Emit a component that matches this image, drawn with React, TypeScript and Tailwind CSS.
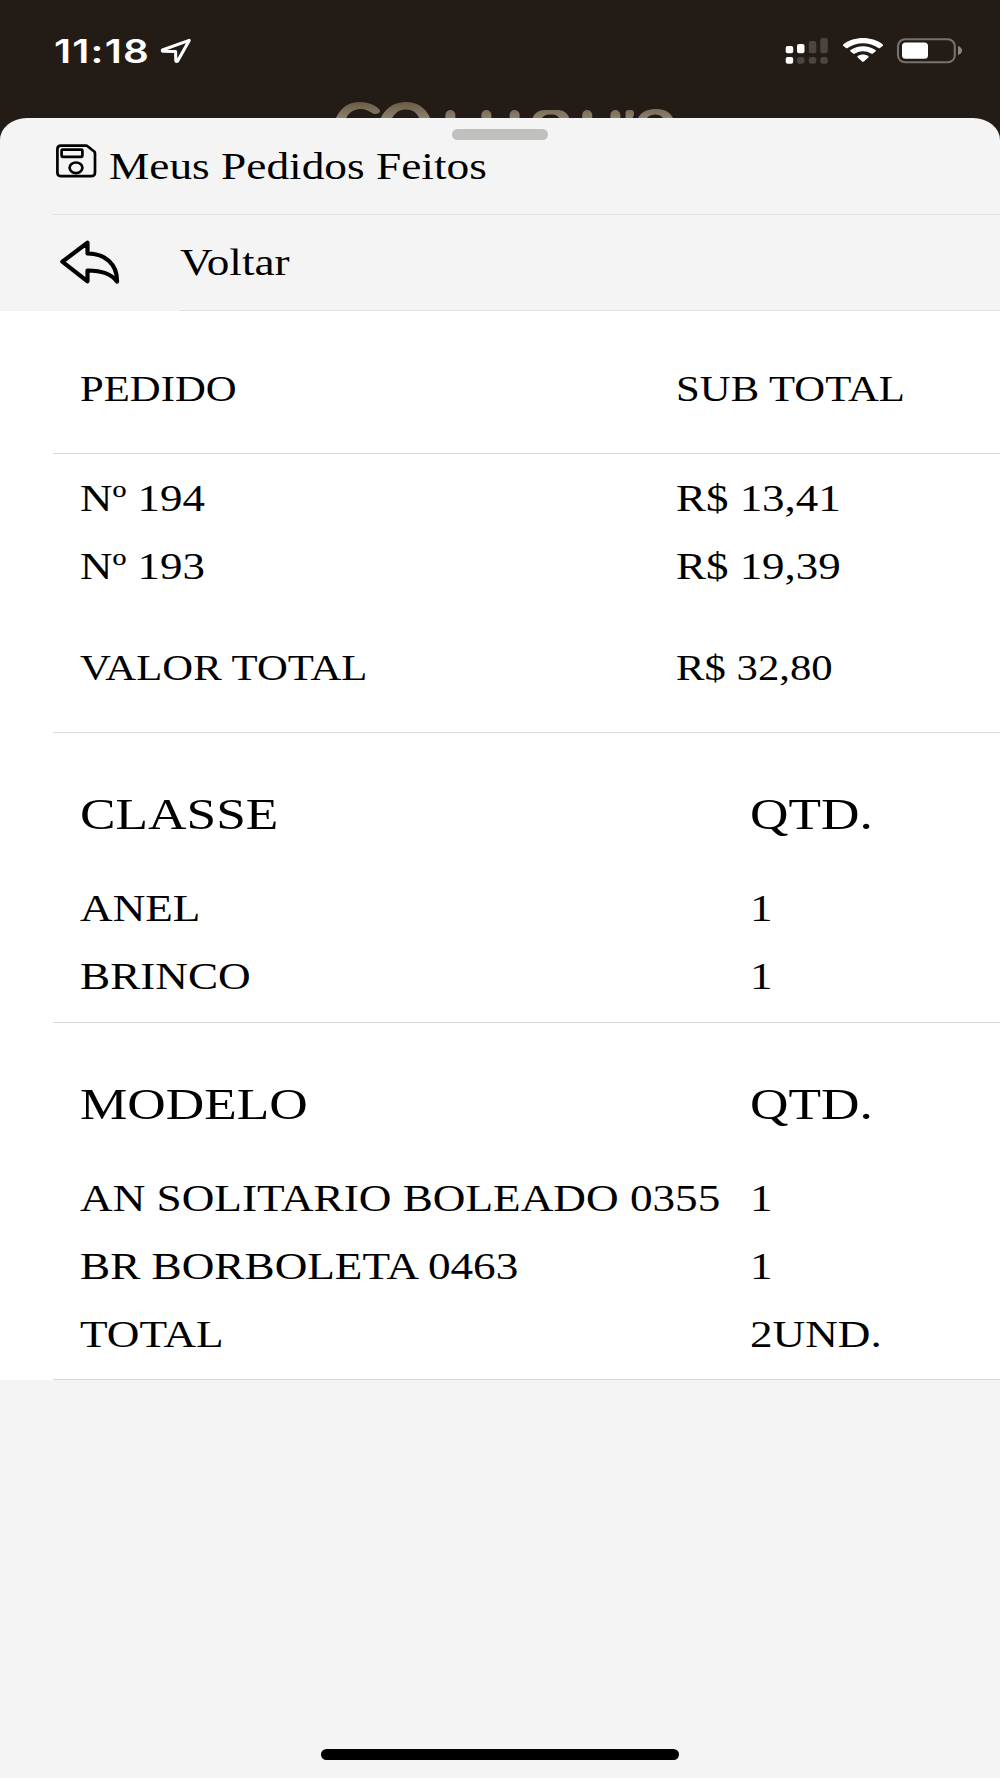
import React from "react";

type Row = { label: string; value: string };

const orders: Row[] = [
  { label: "Nº 194", value: "R$ 13,41" },
  { label: "Nº 193", value: "R$ 19,39" },
];
const classes: Row[] = [
  { label: "ANEL", value: "1" },
  { label: "BRINCO", value: "1" },
];
const models: Row[] = [
  { label: "AN SOLITARIO BOLEADO 0355", value: "1" },
  { label: "BR BORBOLETA 0463", value: "1" },
  { label: "TOTAL", value: "2UND." },
];

/** Horizontally extended text that scales from its left edge. */
function Wide({ children, className = "scale-x-[1.205] pt-px" }: { children: React.ReactNode; className?: string }) {
  return <span className={`block w-max origin-left whitespace-nowrap ${className}`}>{children}</span>;
}

function StatusBar() {
  return (
    <div className="flex h-[118px] shrink-0 flex-col overflow-hidden bg-[#231b16]">
      <div className="flex h-[102px] items-start justify-between pl-[54px] pr-[37px]">
        <div className="flex pt-[31px]">
          <div className="w-[106px] pt-px font-['Inter'] text-[32px] leading-[40px] font-semibold text-white">
            <Wide className="scale-x-[1.26] tracking-[1px]">11:18</Wide>
          </div>
          <svg className="mt-[5px]" width="32" height="28" viewBox="160 36 32 28" fill="none" stroke="#fff" strokeWidth="3.1" strokeLinejoin="round">
            <path d="M189.2 40.4 L162.4 50 Q162 51.3 163.2 51.3 L175.6 51.5 L175.8 60.8 Q176.6 62 177.8 60.8 Z" />
          </svg>
        </div>
        <svg className="mt-[36px]" width="178" height="30" viewBox="785 36 178 30">
          <g fill="#fff">
            <rect x="785.7" y="46" width="7.5" height="7.3" rx="2" />
            <rect x="797" y="44" width="7.5" height="9.3" rx="2" />
            <rect x="785.7" y="57" width="7.5" height="6.8" rx="2" />
          </g>
          <g fill="#4b443f">
            <rect x="808.8" y="41" width="7.5" height="12.3" rx="2" />
            <rect x="820.3" y="38" width="7.5" height="15.3" rx="2" />
            <rect x="797" y="57" width="7.5" height="6.8" rx="2.5" />
            <rect x="808.8" y="57" width="7.5" height="6.8" rx="2.5" />
            <rect x="820.3" y="57" width="7.5" height="6.8" rx="2.5" />
          </g>
          <g fill="#fff">
            <path d="M843.4 44.3 C854 36 872 36 882.6 44.3 Q883.6 45.2 882.6 46 L880 48 Q879.3 48.6 878.4 48 C869.5 41.5 856.5 41.5 847.6 48 Q846.7 48.6 846 48 L843.4 46 Q842.4 45.2 843.4 44.3 Z" />
            <path d="M850.5 50.1 C857.5 44.9 868.5 44.9 875.5 50.1 Q876.4 50.9 875.5 51.6 L872.9 53.6 Q872 54.2 871.2 53.6 C866.4 50.3 859.6 50.3 854.8 53.6 Q854 54.2 853.1 53.6 L850.5 51.6 Q849.6 50.9 850.5 50.1 Z" />
            <path d="M857.8 55.9 C861 53.9 865 53.9 868.2 55.9 Q869.2 56.7 868.3 57.5 L863.9 61.4 Q863 62.2 862.1 61.4 L857.7 57.5 Q856.8 56.7 857.8 55.9 Z" />
          </g>
          <rect x="898" y="39.2" width="56.8" height="23" rx="7" fill="none" stroke="#78716b" strokeWidth="2.1" />
          <rect x="902" y="42.4" width="26" height="16.4" rx="3.5" fill="#fff" />
          <path d="M958 46 Q962 47.5 962 50.5 Q962 53.5 958 55 Z" fill="#8b8580" />
        </svg>
      </div>
      <svg className="ml-[330px]" width="350" height="16" viewBox="330 102 350 16" fill="none">
        <defs>
          <linearGradient id="gold" gradientUnits="userSpaceOnUse" x1="0" y1="101" x2="0" y2="118">
            <stop offset="0" stopColor="#665941" />
            <stop offset="1" stopColor="#8a816d" />
          </linearGradient>
        </defs>
        <g fill="url(#gold)">
          <path d="M335 120 C341 106 350 102 360 102 C368 102 375 105 379 109 C382 112 378 115 373 113.5 C369 111 365 109 361 109 C354 109 349 112 345 120 Z" />
          <path d="M380 120 C385 107 395 102 406 102 C417 102 426 107 431 120 H420 C417 112 412 109.5 406 109.5 C400 109.5 395 112 391 120 Z" />
          <path d="M532 120 C534 112 540 110 546 110 H557 C564 110 568 113 570 120 H560 C558 115 555 114.5 551 114.5 C547 114.5 543 115 541 120 Z" />
          <path d="M637 120 C641 111 648 109 656 109 C664 109 670 111 674 120 H664 C662 115.5 659 114.5 655.5 114.5 C652 114.5 648 115.5 646 120 Z" />
          <path d="M625.5 118 V113 Q625.5 110 629 110 H631 Q634 110 634 113 Q634 116 632.5 118 Z" />
        </g>
        <g stroke="url(#gold)" strokeWidth="10" strokeLinecap="round">
          <path d="M450.4 115 V130 M486.4 115 V130 M514.6 115 V130 M587.2 115 V130 M615.4 115 V130" />
        </g>
      </svg>
    </div>
  );
}

function SaveIcon() {
  return (
    <svg className="mt-[25px] shrink-0" width="42" height="35" viewBox="55 143 42 35" fill="none" stroke="#000" strokeWidth="2.7" strokeLinejoin="round">
      <path d="M61 145.6 H85.7 Q86.8 145.6 87.6 146.3 L94.2 151.5 Q95 152.3 95 153.3 V172.5 Q95 176.2 90.8 176.2 H61.4 Q57.4 176.2 57.4 172.5 V149.2 Q57.4 145.6 61 145.6 Z" />
      <rect x="61.6" y="149.6" width="20.8" height="7.2" rx="1" />
      <ellipse cx="76" cy="167.8" rx="6.4" ry="5.3" />
    </svg>
  );
}

function BackIcon() {
  return (
    <svg className="mt-[23px] shrink-0" width="64" height="48" viewBox="58 238 64 48" fill="none" stroke="#000" strokeWidth="4.2" strokeLinejoin="round">
      <path d="M62.3 261.7 L87.5 242.8 V253.5 C105 253.5 117.5 264 117 281.6 C111 273 100 270.5 87.5 270.5 V281.3 Z" />
    </svg>
  );
}

function Divider({ className = "ml-[53px] bg-[#d9d9d9]" }: { className?: string }) {
  return <div className={`h-px shrink-0 ${className}`} />;
}

function TableRow({ row, columns, scale }: { row: Row; columns: string; scale?: string }) {
  return (
    <div className={`grid h-[68px] items-center pl-[80px] ${columns}`}>
      <Wide className={scale}>{row.label}</Wide>
      <Wide className={scale}>{row.value}</Wide>
    </div>
  );
}

const priceColumns = "grid-cols-[595.5px_1fr]";
const countColumns = "grid-cols-[669.5px_1fr]";

function CountSection({ title, rows }: { title: string; rows: Row[] }) {
  return (
    <section>
      <div className="pt-[47px] pb-[11.5px]">
        <div className="pb-[26px] text-[44.5px]">
          <TableRow row={{ label: title, value: "QTD." }} columns={countColumns} scale="scale-x-[1.197]" />
        </div>
        {rows.map((row) => (
          <TableRow key={row.label} row={row} columns={countColumns} />
        ))}
      </div>
      <Divider />
    </section>
  );
}

export default function App() {
  return (
    <div className="flex h-[1778px] w-[1000px] flex-col overflow-hidden bg-[#231b16] font-['Liberation_Serif',serif] text-[37.5px] leading-[68px] text-black">
      <StatusBar />
      <main className="relative flex flex-1 flex-col overflow-hidden rounded-t-[27px_22px] bg-[#f4f4f4]">
        <div className="absolute top-[11px] left-[452px] h-[11px] w-[96px] rounded-full bg-[#c0c0be]" />
        <header className="flex h-[96px] shrink-0 pl-[55px]">
          <SaveIcon />
          <div className="ml-[12px] pt-[15px]">
            <Wide className="scale-x-[1.209]">Meus Pedidos Feitos</Wide>
          </div>
        </header>
        <Divider className="ml-[53px] bg-[#e2e2e2]" />
        <button className="flex h-[95px] shrink-0 pl-[58px] text-left">
          <BackIcon />
          <span className="ml-[58px] block pt-[13px] text-[38px]">
            <Wide className="scale-x-[1.188]">Voltar</Wide>
          </span>
        </button>
        <Divider className="ml-[180px] bg-[#e2e2e2]" />
        <div className="shrink-0 bg-white">
          <section>
            <div className="pt-[44px] pb-[30px] text-[36px]">
              <TableRow row={{ label: "PEDIDO", value: "SUB TOTAL" }} columns={priceColumns} scale="scale-x-[1.187]" />
            </div>
            <Divider />
          </section>
          <section>
            <div className="pt-[10px] pb-[30px]">
              {orders.map((row) => (
                <TableRow key={row.label} row={row} columns={priceColumns} scale="scale-x-[1.198] pt-px" />
              ))}
              <div className="pt-[34px] text-[36px]">
                <TableRow row={{ label: "VALOR TOTAL", value: "R$ 32,80" }} columns={priceColumns} scale="scale-x-[1.187]" />
              </div>
            </div>
            <Divider />
          </section>
          <CountSection title="CLASSE" rows={classes} />
          <CountSection title="MODELO" rows={models} />
        </div>
        <div className="mx-auto mt-auto mb-[18px] h-[11px] w-[358px] rounded-full bg-black" />
      </main>
    </div>
  );
}
